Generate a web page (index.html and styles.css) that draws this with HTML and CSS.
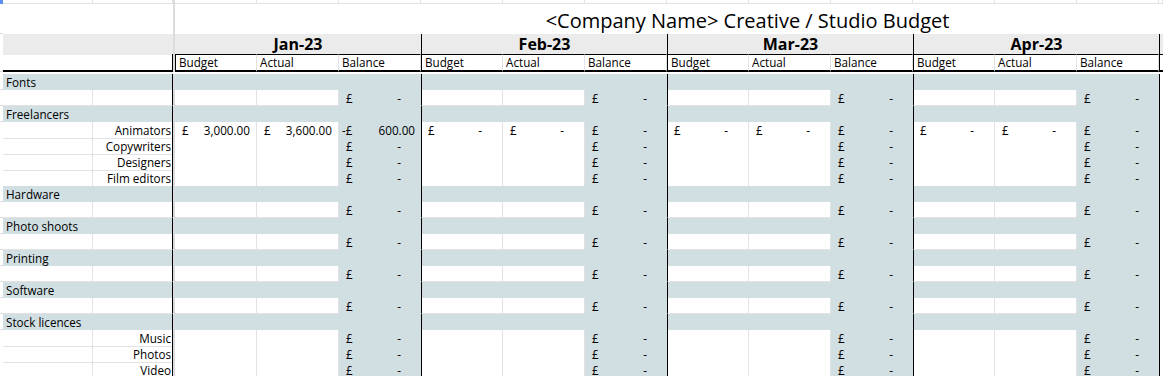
FILE: index.html
```html
<!DOCTYPE html>
<html>
<head>
<meta charset="utf-8">
<link rel="stylesheet" href="styles.css">
</head>
<body>
<div class="sheet">
  <div class="row r-top">
    <div class="s sel"></div><div class="t"></div><div class="t"></div><div class="z"></div>
    <div class="t"></div><div class="t"></div><div class="t"></div>
    <div class="t"></div><div class="t"></div><div class="t"></div>
    <div class="t"></div><div class="t"></div><div class="t"></div>
    <div class="t"></div><div class="t"></div><div class="t"></div>
    <div class="t"></div>
  </div>
  <div class="row r-title">
    <div class="s"></div><div class="blank2"></div><div class="z"></div>
    <div class="title">&lt;Company Name&gt; Creative / Studio Budget</div>
  </div>
  <div class="row r-month">
    <div class="s"></div><div class="mgray2"></div><div class="z"></div>
    <div class="month">Jan-23</div>
    <div class="month g">Feb-23</div>
    <div class="month g">Mar-23</div>
    <div class="month g">Apr-23</div>
    <div class="month end"></div>
  </div>
  <div class="row r-sub">
    <div class="s"></div><div class="subleft"></div><div class="z"></div>
    <div class="sub first">Budget</div><div class="sub">Actual</div><div class="sub">Balance</div>
    <div class="sub g">Budget</div><div class="sub">Actual</div><div class="sub">Balance</div>
    <div class="sub g">Budget</div><div class="sub">Actual</div><div class="sub">Balance</div>
    <div class="sub g">Budget</div><div class="sub">Actual</div><div class="sub">Balance</div>
    <div class="sub end"></div>
  </div>
  <div class="row r-gap"></div>

  <div class="row cat">
    <div class="s"></div><div class="lab">Fonts</div><div class="z"></div>
    <div class="m"></div><div class="m g"></div><div class="m g"></div><div class="m g"></div><div class="e"></div>
  </div>
  <div class="row item">
    <div class="s"></div><div class="a"></div><div class="b"></div><div class="z"></div>
    <div class="w"></div><div class="w"></div><div class="bl"><span class="cur">£</span><span class="dash">-</span></div>
    <div class="w g"></div><div class="w"></div><div class="bl"><span class="cur">£</span><span class="dash">-</span></div>
    <div class="w g"></div><div class="w"></div><div class="bl"><span class="cur">£</span><span class="dash">-</span></div>
    <div class="w g"></div><div class="w"></div><div class="bl"><span class="cur">£</span><span class="dash">-</span></div>
    <div class="e"></div>
  </div>

  <div class="row cat">
    <div class="s"></div><div class="lab">Freelancers</div><div class="z"></div>
    <div class="m"></div><div class="m g"></div><div class="m g"></div><div class="m g"></div><div class="e"></div>
  </div>
  <div class="row item">
    <div class="s"></div><div class="a"></div><div class="b">Animators</div><div class="z"></div>
    <div class="w"><span class="cur">£</span><span>3,000.00</span></div><div class="w"><span class="cur">£</span><span>3,600.00</span></div><div class="bl"><span class="cur neg">-£</span><span>600.00</span></div>
    <div class="w g"><span class="cur">£</span><span class="dash">-</span></div><div class="w"><span class="cur">£</span><span class="dash">-</span></div><div class="bl"><span class="cur">£</span><span class="dash">-</span></div>
    <div class="w g"><span class="cur">£</span><span class="dash">-</span></div><div class="w"><span class="cur">£</span><span class="dash">-</span></div><div class="bl"><span class="cur">£</span><span class="dash">-</span></div>
    <div class="w g"><span class="cur">£</span><span class="dash">-</span></div><div class="w"><span class="cur">£</span><span class="dash">-</span></div><div class="bl"><span class="cur">£</span><span class="dash">-</span></div>
    <div class="e"></div>
  </div>
  <div class="row item">
    <div class="s"></div><div class="a"></div><div class="b">Copywriters</div><div class="z"></div>
    <div class="w"></div><div class="w"></div><div class="bl"><span class="cur">£</span><span class="dash">-</span></div>
    <div class="w g"></div><div class="w"></div><div class="bl"><span class="cur">£</span><span class="dash">-</span></div>
    <div class="w g"></div><div class="w"></div><div class="bl"><span class="cur">£</span><span class="dash">-</span></div>
    <div class="w g"></div><div class="w"></div><div class="bl"><span class="cur">£</span><span class="dash">-</span></div>
    <div class="e"></div>
  </div>
  <div class="row item">
    <div class="s"></div><div class="a"></div><div class="b">Designers</div><div class="z"></div>
    <div class="w"></div><div class="w"></div><div class="bl"><span class="cur">£</span><span class="dash">-</span></div>
    <div class="w g"></div><div class="w"></div><div class="bl"><span class="cur">£</span><span class="dash">-</span></div>
    <div class="w g"></div><div class="w"></div><div class="bl"><span class="cur">£</span><span class="dash">-</span></div>
    <div class="w g"></div><div class="w"></div><div class="bl"><span class="cur">£</span><span class="dash">-</span></div>
    <div class="e"></div>
  </div>
  <div class="row item">
    <div class="s"></div><div class="a"></div><div class="b">Film editors</div><div class="z"></div>
    <div class="w"></div><div class="w"></div><div class="bl"><span class="cur">£</span><span class="dash">-</span></div>
    <div class="w g"></div><div class="w"></div><div class="bl"><span class="cur">£</span><span class="dash">-</span></div>
    <div class="w g"></div><div class="w"></div><div class="bl"><span class="cur">£</span><span class="dash">-</span></div>
    <div class="w g"></div><div class="w"></div><div class="bl"><span class="cur">£</span><span class="dash">-</span></div>
    <div class="e"></div>
  </div>

  <div class="row cat">
    <div class="s"></div><div class="lab">Hardware</div><div class="z"></div>
    <div class="m"></div><div class="m g"></div><div class="m g"></div><div class="m g"></div><div class="e"></div>
  </div>
  <div class="row item">
    <div class="s"></div><div class="a"></div><div class="b"></div><div class="z"></div>
    <div class="w"></div><div class="w"></div><div class="bl"><span class="cur">£</span><span class="dash">-</span></div>
    <div class="w g"></div><div class="w"></div><div class="bl"><span class="cur">£</span><span class="dash">-</span></div>
    <div class="w g"></div><div class="w"></div><div class="bl"><span class="cur">£</span><span class="dash">-</span></div>
    <div class="w g"></div><div class="w"></div><div class="bl"><span class="cur">£</span><span class="dash">-</span></div>
    <div class="e"></div>
  </div>

  <div class="row cat">
    <div class="s"></div><div class="lab">Photo shoots</div><div class="z"></div>
    <div class="m"></div><div class="m g"></div><div class="m g"></div><div class="m g"></div><div class="e"></div>
  </div>
  <div class="row item">
    <div class="s"></div><div class="a"></div><div class="b"></div><div class="z"></div>
    <div class="w"></div><div class="w"></div><div class="bl"><span class="cur">£</span><span class="dash">-</span></div>
    <div class="w g"></div><div class="w"></div><div class="bl"><span class="cur">£</span><span class="dash">-</span></div>
    <div class="w g"></div><div class="w"></div><div class="bl"><span class="cur">£</span><span class="dash">-</span></div>
    <div class="w g"></div><div class="w"></div><div class="bl"><span class="cur">£</span><span class="dash">-</span></div>
    <div class="e"></div>
  </div>

  <div class="row cat">
    <div class="s"></div><div class="lab">Printing</div><div class="z"></div>
    <div class="m"></div><div class="m g"></div><div class="m g"></div><div class="m g"></div><div class="e"></div>
  </div>
  <div class="row item">
    <div class="s"></div><div class="a"></div><div class="b"></div><div class="z"></div>
    <div class="w"></div><div class="w"></div><div class="bl"><span class="cur">£</span><span class="dash">-</span></div>
    <div class="w g"></div><div class="w"></div><div class="bl"><span class="cur">£</span><span class="dash">-</span></div>
    <div class="w g"></div><div class="w"></div><div class="bl"><span class="cur">£</span><span class="dash">-</span></div>
    <div class="w g"></div><div class="w"></div><div class="bl"><span class="cur">£</span><span class="dash">-</span></div>
    <div class="e"></div>
  </div>

  <div class="row cat">
    <div class="s"></div><div class="lab">Software</div><div class="z"></div>
    <div class="m"></div><div class="m g"></div><div class="m g"></div><div class="m g"></div><div class="e"></div>
  </div>
  <div class="row item">
    <div class="s"></div><div class="a"></div><div class="b"></div><div class="z"></div>
    <div class="w"></div><div class="w"></div><div class="bl"><span class="cur">£</span><span class="dash">-</span></div>
    <div class="w g"></div><div class="w"></div><div class="bl"><span class="cur">£</span><span class="dash">-</span></div>
    <div class="w g"></div><div class="w"></div><div class="bl"><span class="cur">£</span><span class="dash">-</span></div>
    <div class="w g"></div><div class="w"></div><div class="bl"><span class="cur">£</span><span class="dash">-</span></div>
    <div class="e"></div>
  </div>

  <div class="row cat">
    <div class="s"></div><div class="lab">Stock licences</div><div class="z"></div>
    <div class="m"></div><div class="m g"></div><div class="m g"></div><div class="m g"></div><div class="e"></div>
  </div>
  <div class="row item">
    <div class="s"></div><div class="a"></div><div class="b">Music</div><div class="z"></div>
    <div class="w"></div><div class="w"></div><div class="bl"><span class="cur">£</span><span class="dash">-</span></div>
    <div class="w g"></div><div class="w"></div><div class="bl"><span class="cur">£</span><span class="dash">-</span></div>
    <div class="w g"></div><div class="w"></div><div class="bl"><span class="cur">£</span><span class="dash">-</span></div>
    <div class="w g"></div><div class="w"></div><div class="bl"><span class="cur">£</span><span class="dash">-</span></div>
    <div class="e"></div>
  </div>
  <div class="row item">
    <div class="s"></div><div class="a"></div><div class="b">Photos</div><div class="z"></div>
    <div class="w"></div><div class="w"></div><div class="bl"><span class="cur">£</span><span class="dash">-</span></div>
    <div class="w g"></div><div class="w"></div><div class="bl"><span class="cur">£</span><span class="dash">-</span></div>
    <div class="w g"></div><div class="w"></div><div class="bl"><span class="cur">£</span><span class="dash">-</span></div>
    <div class="w g"></div><div class="w"></div><div class="bl"><span class="cur">£</span><span class="dash">-</span></div>
    <div class="e"></div>
  </div>
  <div class="row item">
    <div class="s"></div><div class="a"></div><div class="b">Video</div><div class="z"></div>
    <div class="w"></div><div class="w"></div><div class="bl"><span class="cur">£</span><span class="dash">-</span></div>
    <div class="w g"></div><div class="w"></div><div class="bl"><span class="cur">£</span><span class="dash">-</span></div>
    <div class="w g"></div><div class="w"></div><div class="bl"><span class="cur">£</span><span class="dash">-</span></div>
    <div class="w g"></div><div class="w"></div><div class="bl"><span class="cur">£</span><span class="dash">-</span></div>
    <div class="e"></div>
  </div>
</div>
</body>
</html>
```
FILE: styles.css
```css
* { box-sizing: border-box; }
html, body { margin: 0; padding: 0; }
body {
  width: 1163px;
  height: 376px;
  overflow: hidden;
  background: #fff;
  color: #000;
  font-family: "Open Sans", "Liberation Sans", sans-serif;
  font-size: 11.7px;
}
.sheet { display: flex; flex-direction: column; }
.row {
  display: grid;
  grid-template-columns: 3px 90px 80px 2px repeat(12, 82px) 4px;
}
.r-top { height: 4px; }
.r-title { height: 30px; }
.r-month { height: 20px; }
.r-sub { height: 18px; }
.r-gap { height: 2px; }
.cat, .item { height: 16px; line-height: 16px; }

.s { background: #fff; border-bottom: 1px solid #dcdcdc; }
.sel { background: #5a8ef0; border-bottom: none; }
.t { border-right: 1px solid #e2e2e2; border-bottom: 1px solid #e2e2e2; }
.z { background: #dadce0; }

/* title */
.blank2 { grid-column: span 2; }
.title {
  grid-column: 5 / -1;
  padding-left: 157px;
  text-align: center;
  font-size: 20px;
  line-height: 27px;
  align-self: end;
  white-space: nowrap;
}

/* month row */
.mgray2 { grid-column: span 2; background: #ebebeb; }
.month {
  grid-column: span 3;
  background: #ebebeb;
  text-align: center;
  font-weight: 700;
  font-size: 16px;
  line-height: 21px;
  white-space: nowrap;
}
.month.end { grid-column: span 1; }
.g { border-left: 1px solid #000; }
.month.end, .sub.end, .e { border-left: 1px solid #000; }

/* sub header */
.subleft {
  grid-column: span 2;
  border-bottom: 2px solid #000;
  border-right: 1px solid #000;
}
.sub {
  border-top: 1px solid #000;
  border-bottom: 2px solid #000;
  border-right: 1px solid #e2e2e2;
  padding-left: 3px;
  line-height: 15px;
  white-space: nowrap;
}
.sub.first { border-left: 1px solid #000; }
.sub.end { border-right: none; }

/* body */
.lab {
  grid-column: span 2;
  background: #d1dfe3;
  border-right: 1px solid #000;
  padding-left: 3px;
  white-space: nowrap;
}
.m { grid-column: span 3; background: #d1dfe3; }
.e { background: #fff; }
.a {
  border-right: 1px solid #e2e2e2;
  border-bottom: 1px solid #e2e2e2;
}
.b {
  border-right: 1px solid #000;
  border-bottom: 1px solid #e2e2e2;
  text-align: right;
  padding-right: 1px;
  white-space: nowrap;
}
.w, .bl {
  display: flex;
  justify-content: space-between;
  padding: 0 6px 0 7px;
  white-space: nowrap;
}
.w {
  background: #fff;
  border-right: 1px solid #e2e2e2;
  border-bottom: 1px solid #e2e2e2;
}
.bl { background: #d1dfe3; }
.w.g { padding-left: 6px; }
.cur.neg { margin-left: -4px; }
.dash { margin-right: 14px; }
```
